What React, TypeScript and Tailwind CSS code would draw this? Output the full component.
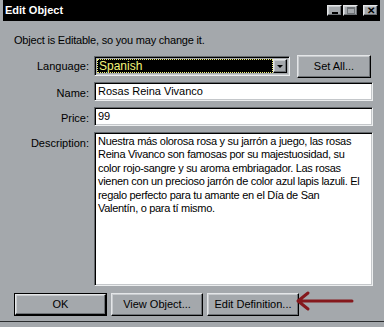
import React from 'react'

const sunken =
  'border border-t-[#65696d] border-l-[#65696d] border-b-[#eceeef] border-r-[#eceeef] shadow-[inset_1px_1px_0_#000,inset_-1px_-1px_0_#c4c7ca]'

const raised =
  'border border-t-[#e4e6e8] border-l-[#e4e6e8] border-b-black border-r-black shadow-[inset_-1px_-1px_0_#6e7276,inset_1px_1px_0_#c8cbce] bg-[#a4a8ac]'

const descriptionLines = [
  'Nuestra más olorosa rosa y su jarrón a juego, las rosas',
  'Reina Vivanco son famosas por su majestuosidad, su',
  'color rojo-sangre y su aroma embriagador. Las rosas',
  'vienen con un precioso jarrón de color azul lapis lazuli. El',
  'regalo perfecto para tu amante en el Día de San',
  'Valentín, o para tí mismo.',
]

function TitleButton({ children }: { children: React.ReactNode }) {
  return (
    <div
      className={`flex h-[11px] w-[15px] items-center justify-center ${raised}`}
    >
      {children}
    </div>
  )
}

function DialogButton({
  label,
  isDefault,
  width,
}: {
  label: string
  isDefault?: boolean
  width: string
}) {
  return (
    <div
      className={`${width} h-[23px] ${isDefault ? 'border border-black' : ''}`}
    >
      <div
        className={`flex h-full w-full items-center justify-center text-[11px] text-black ${raised}`}
      >
        {label}
      </div>
    </div>
  )
}

function FieldRow({
  label,
  children,
  className = '',
}: {
  label: string
  children: React.ReactNode
  className?: string
}) {
  return (
    <div className={`flex gap-[5px] ${className}`}>
      <div className="w-[75px] shrink-0 pt-[3px] text-right text-[11px] text-black">
        {label}
      </div>
      {children}
    </div>
  )
}

export default function App() {
  return (
    <div
      className="relative h-[327px] w-[384px] overflow-hidden bg-[#a4a8ac]"
      style={{ fontFamily: '"Liberation Sans", Arial, sans-serif' }}
    >
      <div className="flex h-[322px] flex-col border-b border-b-[#2a2c2e] pl-[3px] pr-[4px]">
        {/* title bar */}
        <div className="flex h-[21px] shrink-0 items-center justify-between bg-black pl-[2px] pr-[2px]">
          <span className="text-[11px] font-bold text-white">Edit Object</span>
          <div className="flex items-center">
            <TitleButton>
              <div className="mt-[5px] h-[2px] w-[6px] bg-black" />
            </TitleButton>
            <div className="ml-[1px]">
              <TitleButton>
                <div className="h-[7px] w-[8px] border border-t-2 border-[#6e7276]" />
              </TitleButton>
            </div>
            <div className="ml-[5px]">
              <TitleButton>
                <span className="text-[10px] font-bold leading-none text-black">
                  ✕
                </span>
              </TitleButton>
            </div>
          </div>
        </div>

        <div className="flex flex-1 flex-col pl-[11px] pr-[7px]">
          <div className="pt-[13px] text-[11px] leading-[13px] tracking-[-0.2px] text-black">
            Object is Editable, so you may change it.
          </div>

          <FieldRow label="Language:" className="mt-[8px] items-start">
            <div className="flex flex-1 items-start gap-[7px]">
              <div className={`mt-[1px] flex h-[20px] w-[196px] ${sunken} p-[2px]`}>
                <div className="flex flex-1 items-center border border-dotted border-[#f2f27a] bg-black pl-[1px] text-[12px] text-[#f4f47c]">
                  Spanish
                </div>
                <div className={`flex w-[14px] items-center justify-center ${raised}`}>
                  <div className="h-0 w-0 border-x-[3px] border-t-[3px] border-x-transparent border-t-black" />
                </div>
              </div>
              <DialogButton label="Set All..." width="w-[74px]" />
            </div>
          </FieldRow>

          <FieldRow label="Name:" className="mt-[4px]">
            <div
              className={`flex h-[19px] flex-1 items-center bg-white pl-[3px] text-[11px] text-black ${sunken}`}
            >
              Rosas Reina Vivanco
            </div>
          </FieldRow>

          <FieldRow label="Price:" className="mt-[5px]">
            <div
              className={`flex h-[19px] flex-1 items-center bg-white pl-[3px] text-[11px] text-black ${sunken}`}
            >
              99
            </div>
          </FieldRow>

          <FieldRow label="Description:" className="mt-[6px]">
            <div
              className={`h-[154px] flex-1 overflow-hidden bg-white pl-[3px] pt-[2px] text-[11px] leading-[13.4px] tracking-[-0.3px] text-black ${sunken}`}
            >
              {descriptionLines.map((line) => (
                <div key={line} className="whitespace-nowrap">
                  {line}
                </div>
              ))}
            </div>
          </FieldRow>

          <div className="mt-[7px] flex gap-[4px]">
            <DialogButton label="OK" isDefault width="w-[93px]" />
            <DialogButton label="View Object..." width="w-[92px]" />
            <DialogButton label="Edit Definition..." width="w-[92px]" />
          </div>
        </div>
      </div>

      {/* annotation arrow */}
      <svg
        className="absolute left-[295px] top-[290px]"
        width="62"
        height="22"
        viewBox="0 0 62 22"
      >
        <path
          d="M3 11 H57 M3 11 L13 3 M3 11 L13 19"
          stroke="#85181c"
          strokeWidth="3"
          fill="none"
          strokeLinecap="round"
        />
      </svg>
    </div>
  )
}
